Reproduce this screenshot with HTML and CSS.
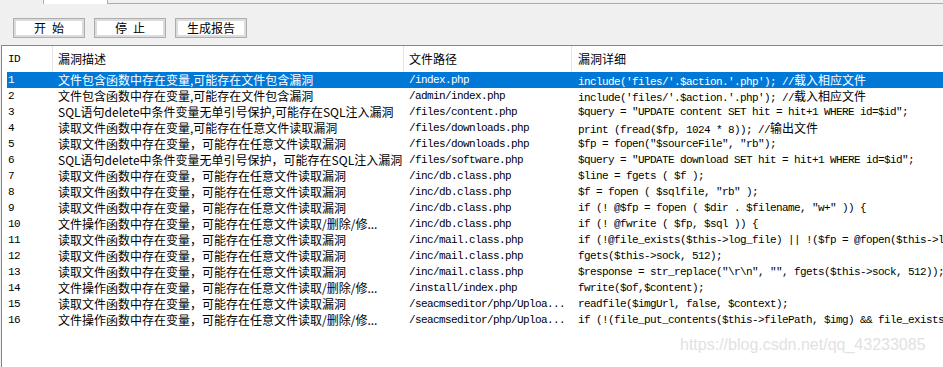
FILE: index.html
```html
<!DOCTYPE html>
<html lang="zh-CN">
<head>
  <meta charset="UTF-8">
  <title>代码审计</title>
  <link rel="stylesheet" href="styles.css">
</head>
<body>

  <!-- tab strip (only its bottom edge is visible) -->
  <div class="tabs">
    <div class="tab"></div>
    <div class="tab active"></div>
    <div class="tab-fill"></div>
  </div>

  <div class="toolbar">
    <button class="btn">开&ensp;始</button>
    <button class="btn">停&ensp;止</button>
    <button class="btn">生成报告</button>
  </div>

  <div class="list">
    <div class="head">
      <span class="mono">ID</span>
      <span>漏洞描述</span>
      <span>文件路径</span>
      <span>漏洞详细</span>
    </div>

    <div class="row sel">
      <span class="mono">1</span>
      <span>文件包含函数中存在变量,可能存在文件包含漏洞</span>
      <span class="mono">/index.php</span>
      <span class="mono">include('files/'.$action.'.php'); //<i class="zh">载入相应文件</i></span>
    </div>
    <div class="row">
      <span class="mono">2</span>
      <span>文件包含函数中存在变量,可能存在文件包含漏洞</span>
      <span class="mono">/admin/index.php</span>
      <span class="mono">include('files/'.$action.'.php'); //<i class="zh">载入相应文件</i></span>
    </div>
    <div class="row">
      <span class="mono">3</span>
      <span>SQL语句delete中条件变量无单引号保护,可能存在SQL注入漏洞</span>
      <span class="mono">/files/content.php</span>
      <span class="mono">$query = "UPDATE content SET hit = hit+1 WHERE id=$id";</span>
    </div>
    <div class="row">
      <span class="mono">4</span>
      <span>读取文件函数中存在变量,可能存在任意文件读取漏洞</span>
      <span class="mono">/files/downloads.php</span>
      <span class="mono">print (fread($fp, 1024 * 8)); //<i class="zh">输出文件</i></span>
    </div>
    <div class="row">
      <span class="mono">5</span>
      <span>读取文件函数中存在变量，可能存在任意文件读取漏洞</span>
      <span class="mono">/files/downloads.php</span>
      <span class="mono">$fp = fopen("$sourceFile", "rb");</span>
    </div>
    <div class="row">
      <span class="mono">6</span>
      <span>SQL语句delete中条件变量无单引号保护，可能存在SQL注入漏洞</span>
      <span class="mono">/files/software.php</span>
      <span class="mono">$query = "UPDATE download SET hit = hit+1 WHERE id=$id";</span>
    </div>
    <div class="row">
      <span class="mono">7</span>
      <span>读取文件函数中存在变量，可能存在任意文件读取漏洞</span>
      <span class="mono">/inc/db.class.php</span>
      <span class="mono">$line = fgets ( $f );</span>
    </div>
    <div class="row">
      <span class="mono">8</span>
      <span>读取文件函数中存在变量，可能存在任意文件读取漏洞</span>
      <span class="mono">/inc/db.class.php</span>
      <span class="mono">$f = fopen ( $sqlfile, "rb" );</span>
    </div>
    <div class="row">
      <span class="mono">9</span>
      <span>读取文件函数中存在变量，可能存在任意文件读取漏洞</span>
      <span class="mono">/inc/db.class.php</span>
      <span class="mono">if (! @$fp = fopen ( $dir . $filename, "w+" )) {</span>
    </div>
    <div class="row">
      <span class="mono">10</span>
      <span>文件操作函数中存在变量，可能存在任意文件读取/删除/修...</span>
      <span class="mono">/inc/db.class.php</span>
      <span class="mono">if (! @fwrite ( $fp, $sql )) {</span>
    </div>
    <div class="row">
      <span class="mono">11</span>
      <span>读取文件函数中存在变量，可能存在任意文件读取漏洞</span>
      <span class="mono">/inc/mail.class.php</span>
      <span class="mono">if (!@file_exists($this-&gt;log_file) || !($fp = @fopen($this-&gt;log_file, 'a'))) {</span>
    </div>
    <div class="row">
      <span class="mono">12</span>
      <span>读取文件函数中存在变量，可能存在任意文件读取漏洞</span>
      <span class="mono">/inc/mail.class.php</span>
      <span class="mono">fgets($this-&gt;sock, 512);</span>
    </div>
    <div class="row">
      <span class="mono">13</span>
      <span>读取文件函数中存在变量，可能存在任意文件读取漏洞</span>
      <span class="mono">/inc/mail.class.php</span>
      <span class="mono">$response = str_replace("\r\n", "", fgets($this-&gt;sock, 512));</span>
    </div>
    <div class="row">
      <span class="mono">14</span>
      <span>文件操作函数中存在变量，可能存在任意文件读取/删除/修...</span>
      <span class="mono">/install/index.php</span>
      <span class="mono">fwrite($of,$content);</span>
    </div>
    <div class="row">
      <span class="mono">15</span>
      <span>读取文件函数中存在变量，可能存在任意文件读取漏洞</span>
      <span class="mono">/seacmseditor/php/Uploa...</span>
      <span class="mono">readfile($imgUrl, false, $context);</span>
    </div>
    <div class="row">
      <span class="mono">16</span>
      <span>文件操作函数中存在变量，可能存在任意文件读取/删除/修...</span>
      <span class="mono">/seacmseditor/php/Uploa...</span>
      <span class="mono">if (!(file_put_contents($this-&gt;filePath, $img) &amp;&amp; file_exists($this-&gt;filePath))) {</span>
    </div>

    <div class="watermark">https://blog.csdn.net/qq_43233085</div>
  </div>

</body>
</html>
```

FILE: styles.css
```css
* {
  box-sizing: border-box;
}

body {
  margin: 0;
  height: 100vh;
  display: flex;
  flex-direction: column;
  background-color: #f0f0f0;
  font-family: "Noto Sans CJK SC", sans-serif;
  font-size: 12px;
  color: #000;
  overflow: hidden;
}

/* Tab strip */
.tabs {
  display: flex;
  height: 4px;
  flex-shrink: 0;
}

.tab {
  width: 44px;
  border-right: 1px solid #adadad;
}

.tab.active {
  width: 64px;
  background-color: #fff;
}

.tab-fill {
  flex: 1;
  border-bottom: 1px solid #adadad;
}

/* Buttons */
.toolbar {
  display: flex;
  gap: 9px;
  height: 41px;
  padding: 14px 0 0 13px;
  flex-shrink: 0;
}

.btn {
  width: 72px;
  height: 20px;
  padding: 0;
  background-color: #fff;
  border: 1px solid #adadad;
  box-shadow: inset 0 0 0 2px #dcdcdc;
  font-family: "Noto Sans CJK SC", sans-serif;
  font-size: 12px;
  line-height: 18px;
  color: #000;
}

/* List view */
.list {
  position: relative;
  flex: 1;
  margin-left: 1px;
  background-color: #fff;
  border-top: 1px solid #828790;
  border-left: 1px solid #828790;
  overflow: hidden;
}

.head {
  display: grid;
  grid-template-columns: 50px 351px 168px 1fr;
  height: 26px;
  line-height: 26px;
}

.head span {
  padding-left: 6px;
  white-space: nowrap;
}

.head span + span {
  border-left: 1px solid #e5e5e5;
  padding-left: 5px;
}

.head span:last-child {
  padding-left: 6px;
}

.row {
  display: grid;
  grid-template-columns: 45px 351px 168px 1fr;
  height: 16px;
  margin-left: 5px;
  line-height: 16px;
}

.row span {
  padding-left: 6px;
  white-space: nowrap;
  overflow: hidden;
}

.row span:first-child {
  padding-left: 1px;
}

.row span:last-child {
  padding-left: 7px;
  overflow: visible;
}

.row.sel {
  background-color: #0078d7;
  color: #fff;
}

.mono {
  font-family: "Liberation Mono", monospace;
  font-size: 11px;
  letter-spacing: -0.6px;
}

.zh {
  font-style: normal;
  font-family: "Noto Sans CJK SC", sans-serif;
  font-size: 12px;
  letter-spacing: 0;
}

.watermark {
  position: absolute;
  left: 678px;
  top: 289px;
  font-family: "Liberation Sans", sans-serif;
  font-size: 16px;
  line-height: 20px;
  color: #e2e2e2;
  white-space: nowrap;
}
```
